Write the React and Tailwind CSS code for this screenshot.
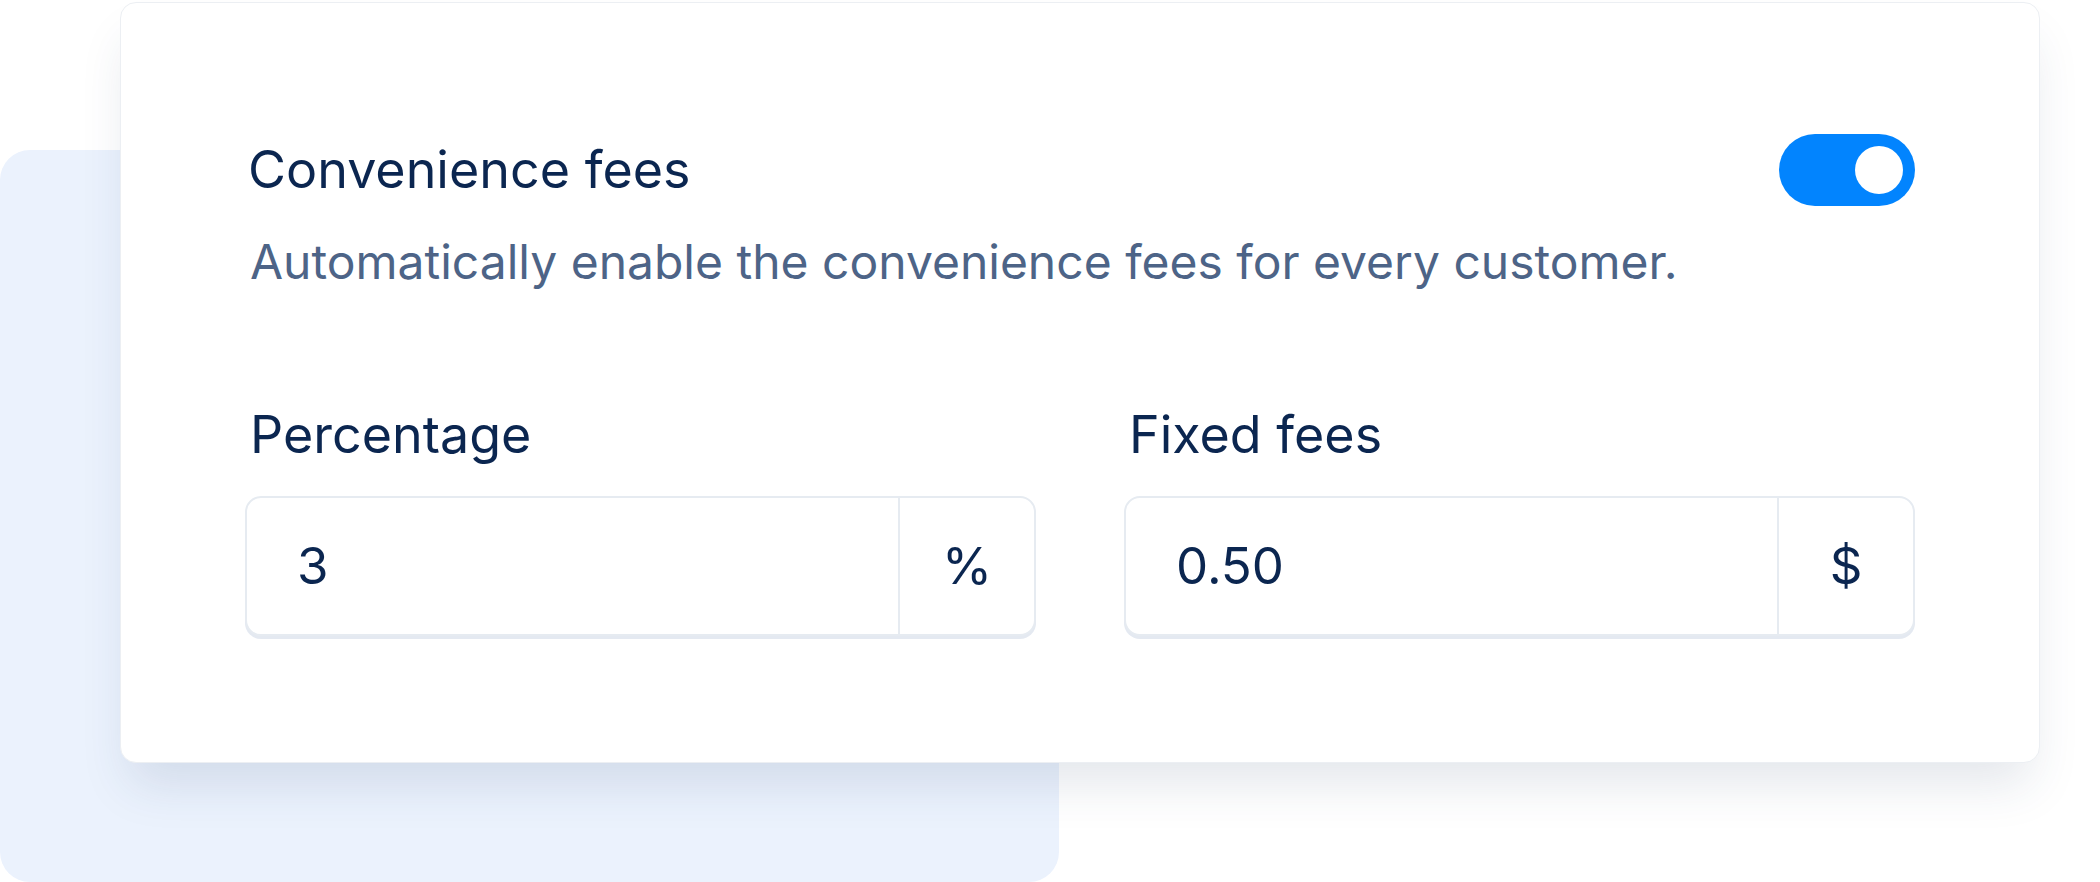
import React from "react";

function Field({ label, value, suffix }) {
  return (
    <div className="flex flex-col">
      <div className="pl-[5px] text-[52px] leading-[64px] text-[#0b2650]">{label}</div>
      <div className="mt-[29px] flex h-[140px] rounded-[16px] border-2 border-[#e6ebf1] bg-white shadow-[0_3px_0_0_rgba(225,231,240,0.9)]">
        <div className="flex flex-1 items-center pl-[50px] text-[51px] text-[#0b2650]">{value}</div>
        <div className="flex w-[136px] items-center justify-center border-l-2 border-[#e6ebf1] text-[51px] text-[#0b2650]">{suffix}</div>
      </div>
    </div>
  );
}

export default function App() {
  return (
    <div className="relative h-[882px] w-[2100px] overflow-hidden bg-white" style={{ fontFamily: "Inter, 'Noto Sans', sans-serif" }}>
      <div className="absolute left-0 top-[150px] h-[732px] w-[1059px] rounded-[30px] bg-[#ebf2fd]" />
      <div className="relative z-10 ml-[120px] mt-[2px] w-[1920px] rounded-[16px] border border-[#eceff3] bg-white px-[124px] pb-[126px] pt-[131px] shadow-[0_30px_50px_-10px_rgba(40,60,100,0.13)]">
        <div className="flex h-[72px] items-center justify-between">
          <div className="pl-[3px] text-[52px] font-normal text-[#0b2650]">Convenience fees</div>
          <div className="flex h-[72px] w-[136px] items-center justify-end rounded-full bg-[#0284fe] p-[12px]">
            <div className="h-[48px] w-[48px] rounded-full bg-white" />
          </div>
        </div>
        <div className="mt-[20px] pl-[5px] text-[48px] leading-[72px] text-[#4d6487]">
          Automatically enable the convenience fees for every customer.
        </div>
        <div className="mt-[105px] grid grid-cols-2 gap-x-[88px]">
          <Field label="Percentage" value="3" suffix="%" />
          <Field label="Fixed fees" value="0.50" suffix="$" />
        </div>
      </div>
    </div>
  );
}
